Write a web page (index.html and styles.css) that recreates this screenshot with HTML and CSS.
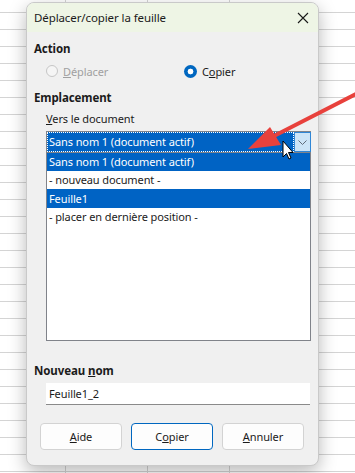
FILE: index.html
```html
<!DOCTYPE html>
<html lang="fr">
<head>
    <meta charset="UTF-8">
    <meta name="viewport" content="width=device-width, initial-scale=1.0">
    <title>Déplacer/copier la feuille</title>
    <link rel="stylesheet" href="styles.css">
</head>
<body>
<div class="sheet">
    <div class="dialog">
        <div class="titlebar">
            <span class="title">Déplacer/copier la feuille</span>
            <svg class="close" width="12" height="12" viewBox="0 0 12 12">
                <path d="M1 1 L11 11 M11 1 L1 11" stroke="#1a1a1a" stroke-width="1.1" fill="none"/>
            </svg>
        </div>
        <div class="content">
            <div class="section-label">Action</div>
            <div class="radios">
                <label class="radio disabled"><span class="dot"></span><span><u>D</u>éplacer</span></label>
                <label class="radio checked"><span class="dot"></span><span>C<u>o</u>pier</span></label>
            </div>
            <div class="section-label">Emplacement</div>
            <div class="sub-label"><u>V</u>ers le document</div>
            <div class="listbox">
                <div class="combo">
                    <span class="combo-text">Sans nom 1 (document actif)</span>
                    <span class="combo-btn">
                        <svg width="9" height="5" viewBox="0 0 9 5"><path d="M0.5 0.5 L4.5 4.5 L8.5 0.5" stroke="#5f6b7a" fill="none"/></svg>
                    </span>
                </div>
                <div class="items">
                    <div class="item selected">Sans nom 1 (document actif)</div>
                    <div class="item">- nouveau document -</div>
                    <div class="item selected tall">Feuille1</div>
                    <div class="item">- placer en dernière position -</div>
                </div>
            </div>
            <div class="section-label name-label">Nouveau <u>n</u>om</div>
            <div class="name-input">Feuille1_2</div>
            <div class="buttons">
                <div class="btn"><u>A</u>ide</div>
                <div class="btn default">C<u>o</u>pier</div>
                <div class="btn"><u>A</u>nnuler</div>
            </div>
        </div>
    </div>

    <!-- annotation arrow + mouse pointer drawn over the dialog -->
    <svg class="overlay" width="355" height="473" viewBox="0 0 355 473">
        <line x1="358" y1="93" x2="272" y2="137" stroke="#e8413c" stroke-width="4" stroke-linecap="round"/>
        <polygon points="248,149 270,127 281,145" fill="#e8413c"/>
        <path d="M283 141 L283 157 L286.5 153.5 L289 159 L291 158 L288.5 152.5 L293 152.5 Z" fill="#fff" stroke="#000" stroke-width="1" stroke-linejoin="round"/>
    </svg>
</div>
</body>
</html>
```

FILE: styles.css
```css
body {
    margin: 0;
    font-family: "Noto Sans", "Liberation Sans", sans-serif;
    font-size: 11px;
    letter-spacing: -0.1px;
    color: #1b1b1b;
}

.sheet {
    position: relative;
    width: 355px;
    height: 473px;
    overflow: hidden;
    box-sizing: border-box;
    padding: 2px 0 0 26px;
    background-color: #fff;
    background-image:
        repeating-linear-gradient(to bottom, transparent 0, transparent 12px, #d4d4d4 12px, #d4d4d4 13px, transparent 13px, transparent 17px),
        linear-gradient(to right, transparent 65px, #d4d4d4 65px, #d4d4d4 66px, transparent 66px, transparent 147px, #d4d4d4 147px, #d4d4d4 148px, transparent 148px, transparent 229px, #d4d4d4 229px, #d4d4d4 230px, transparent 230px);
}

.dialog {
    width: 293px;
    height: 464px;
    box-sizing: border-box;
    border: 1px solid #c9c9c9;
    border-radius: 8px;
    background: #f0f0f0;
    box-shadow: 0 6px 18px rgba(0, 0, 0, 0.28);
    overflow: hidden;
    display: flex;
    flex-direction: column;
}

.titlebar {
    height: 29px;
    background: #eef5e5;
    display: flex;
    align-items: center;
    justify-content: space-between;
    padding: 0 9px 0 7px;
    flex-shrink: 0;
}

.title {
    font-size: 11.5px;
}

.close {
    display: block;
}

.content {
    padding: 8px 8px 0 7px;
    display: flex;
    flex-direction: column;
}

.section-label {
    font-weight: bold;
    font-size: 11.5px;
    height: 17px;
    line-height: 17px;
}

.radios {
    display: flex;
    height: 24px;
    align-items: center;
    margin: 2px 0 6px 12px;
}

.radio {
    display: flex;
    align-items: center;
    gap: 5px;
    width: 138px;
    flex-shrink: 0;
}

.radio .dot {
    width: 12px;
    height: 12px;
    border-radius: 50%;
    box-sizing: border-box;
    flex-shrink: 0;
}

.radio.disabled {
    color: #a0a0a0;
}

.radio.disabled .dot {
    border: 1px solid #c6c6c6;
    background: #f5f5f5;
}

.radio.checked .dot {
    width: 13px;
    height: 13px;
    background: radial-gradient(circle, #fff 0, #fff 2.6px, #0067c0 3.2px);
}

.sub-label {
    margin: 4px 0 0 12px;
    height: 17px;
    line-height: 17px;
}

.listbox {
    margin: 4px 0 0 12px;
    width: 265px;
}

.combo {
    height: 22px;
    background: #0063c4;
    display: flex;
    align-items: stretch;
    color: #fff;
    box-sizing: border-box;
    border: 1px solid #80838a;
    border-right: 0;
}

.combo-text {
    flex: 1;
    outline: 1px dotted #fff;
    outline-offset: -1px;
    border: 1px dotted #000;
    padding-left: 1px;
    line-height: 18px;
}

.combo-btn {
    width: 15px;
    background: #cce4f7;
    border: 1px solid #2f86d6;
    display: flex;
    align-items: center;
    justify-content: center;
}

.items {
    height: 188px;
    background: #fff;
    border: 1px solid #80838a;
    border-top: 0;
    box-sizing: border-box;
}

.item {
    height: 18px;
    line-height: 17px;
    padding-left: 2px;
}

.item.tall {
    height: 19px;
    line-height: 19px;
}

.item.selected {
    background: #0063c4;
    color: #fff;
}

.name-label {
    margin-top: 21px;
}

.name-input {
    margin: 4px 0 0 12px;
    width: 264px;
    height: 22px;
    box-sizing: border-box;
    background: #fff;
    border-bottom: 1px solid #8a8a8a;
    line-height: 21px;
    padding-left: 3px;
}

.buttons {
    display: flex;
    gap: 9px;
    margin: 18px 0 0 6px;
}

.btn {
    width: 82px;
    height: 27px;
    box-sizing: border-box;
    border: 1px solid #d3d3d3;
    border-radius: 4px;
    background: #fdfdfd;
    text-align: center;
    line-height: 25px;
}

.btn.default {
    border-color: #0067c0;
}

.overlay {
    position: absolute;
    left: 0;
    top: 0;
}
```
